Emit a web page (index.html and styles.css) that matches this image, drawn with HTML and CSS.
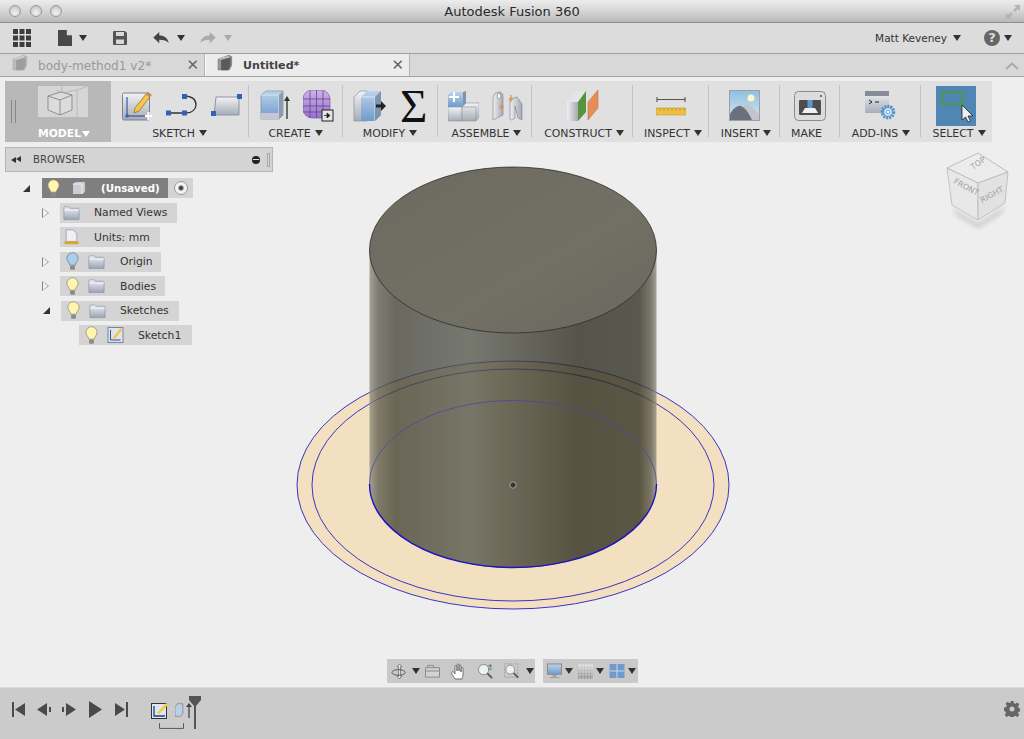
FILE: index.html
```html
<!DOCTYPE html>
<html lang="en">
<head>
<meta charset="utf-8">
<title>Autodesk Fusion 360</title>
<link rel="stylesheet" href="styles.css">
</head>
<body>
<svg class="defs" aria-hidden="true">
  <defs>
    <linearGradient id="gBlue" x1="0" y1="0" x2="0" y2="1"><stop offset="0" stop-color="#bcd3ea"/><stop offset="1" stop-color="#6f9bcb"/></linearGradient>
    <linearGradient id="gSilver" x1="0" y1="0" x2="0" y2="1"><stop offset="0" stop-color="#f2f3f5"/><stop offset="1" stop-color="#a7acb5"/></linearGradient>
    <linearGradient id="gSilverH" x1="0" y1="0" x2="1" y2="0"><stop offset="0" stop-color="#eef0f2"/><stop offset="1" stop-color="#a4a8b0"/></linearGradient>
    <linearGradient id="gFolder" x1="0" y1="0" x2="0" y2="1"><stop offset="0" stop-color="#f1f2f5"/><stop offset="1" stop-color="#9aa3b5"/></linearGradient>
    <linearGradient id="gPlate" x1="0" y1="0" x2="0" y2="1"><stop offset="0" stop-color="#f1f2f4"/><stop offset="1" stop-color="#a6adb8"/></linearGradient>
    <linearGradient id="gSky" x1="0" y1="0" x2="0" y2="1"><stop offset="0" stop-color="#8dc0e2"/><stop offset="1" stop-color="#d8e7ee"/></linearGradient>
    <linearGradient id="gPurple" x1="0" y1="0" x2="0" y2="1"><stop offset="0" stop-color="#cdb2ea"/><stop offset="1" stop-color="#9a6fd0"/></linearGradient>
    <linearGradient id="gCyl" x1="0" y1="0" x2="1" y2="0">
      <stop offset="0" stop-color="#908e80"/><stop offset=".03" stop-color="#605d4f"/><stop offset=".09" stop-color="#454337"/><stop offset=".21" stop-color="#4b4c43"/><stop offset=".35" stop-color="#54574b"/><stop offset=".52" stop-color="#424237"/><stop offset=".73" stop-color="#2a291d"/><stop offset=".94" stop-color="#302e21"/><stop offset=".98" stop-color="#5b584a"/><stop offset="1" stop-color="#908e80"/>
    </linearGradient>
    <linearGradient id="gCap" x1="0" y1="0" x2="1" y2="1"><stop offset="0" stop-color="#6d6a60"/><stop offset=".6" stop-color="#726f65"/><stop offset="1" stop-color="#6a675e"/></linearGradient>
    <filter id="soft" x="-20%" y="-20%" width="140%" height="140%"><feGaussianBlur stdDeviation="2.500"/></filter>
    <symbol id="bulbY" viewBox="0 0 12 18"><path d="M6 .7a5.300 5.300 0 0 0-5.300 5.300c0 2.700 2.300 3.700 2.800 6.500h5C9 9.700 11.300 8.700 11.300 6A5.300 5.300 0 0 0 6 .7z" fill="#fff5ae" stroke="#8c8a70" stroke-width=".7"/><rect x="3.700" y="12.800" width="4.600" height="4" rx="1" fill="#8a8a8a"/></symbol>
    <symbol id="bulbB" viewBox="0 0 12 18"><path d="M6 .7a5.300 5.300 0 0 0-5.300 5.300c0 2.700 2.300 3.700 2.800 6.500h5C9 9.700 11.300 8.700 11.300 6A5.300 5.300 0 0 0 6 .7z" fill="#a9cfee" stroke="#66788c" stroke-width=".7"/><rect x="3.700" y="12.800" width="4.600" height="4" rx="1" fill="#8a8a8a"/></symbol>
    <symbol id="folder" viewBox="0 0 18 16"><path d="M1 15V2.500q0-1 1-1h4l1.500 1.500H16q1 0 1 1V15z" fill="url(#gFolder)" stroke="#8f96a5" stroke-width=".8"/><path d="M1 5h16" stroke="#fff" stroke-width=".7"/></symbol>
    <symbol id="box" viewBox="0 0 20 20"><path d="M2 6l13-5 4 2v10l-3 6H2z" fill="#8a8a88"/><path d="M3 5l11-3 3 2-11 3z" fill="#bdbdbb"/><path d="M3 5l3 2v11l-3-2z" fill="#999"/><path d="M6 7l11-3v10l-3 5H6z" fill="#5a5a58"/></symbol>
  </defs>
</svg>

<div class="app">
  <header class="titlebar">
    <div class="lights"><i class="light"></i><i class="light"></i><i class="light"></i></div>
    <div class="title">Autodesk Fusion 360</div>
    <svg class="expand" viewBox="0 0 16 16"><path d="M9 1h6v6l-2-2-3 3-2-2 3-3zM7 15H1V9l2 2 3-3 2 2-3 3z" fill="#b4b4b4"/></svg>
  </header>

  <nav class="toolbar">
    <svg class="tb-grid" viewBox="0 0 18 18"><g fill="#3c3c3c"><rect width="5" height="5"/><rect x="6.500" width="5" height="5"/><rect x="13" width="5" height="5"/><rect y="6.500" width="5" height="5"/><rect x="6.500" y="6.500" width="5" height="5"/><rect x="13" y="6.500" width="5" height="5"/><rect y="13" width="5" height="5"/><rect x="6.500" y="13" width="5" height="5"/><rect x="13" y="13" width="5" height="5"/></g></svg>
    <svg class="tb-doc" viewBox="0 0 14 16"><path d="M0 0h8.500L14 5.500V16H0z" fill="#484848"/><path d="M8.800 0v5.200H14z" fill="#ddd"/></svg>
    <i class="caret caret-dark tb-doc-caret"></i>
    <svg class="tb-save" viewBox="0 0 14 14"><path d="M0 1q0-1 1-1h11l2 2v11q0 1-1 1H1q-1 0-1-1z" fill="#555"/><rect x="3" y="1" width="8" height="4" fill="#d9d9d9"/><rect x="3" y="8.500" width="8" height="4.500" fill="#d9d9d9"/></svg>
    <svg class="tb-undo" viewBox="0 0 18 14"><path d="M7 0v4c6 0 10 3 11 9-2-3-6-4-11-4v4L0 6.500z" fill="#444"/></svg>
    <i class="caret caret-dark tb-undo-caret"></i>
    <svg class="tb-redo" viewBox="0 0 18 14"><path d="M11 0v4C5 4 1 7 0 13c2-3 6-4 11-4v4l7-6.500z" fill="#ababab"/></svg>
    <i class="caret caret-faint tb-redo-caret"></i>
    <span class="tb-spacer"></span>
    <span class="user">Matt Keveney</span>
    <i class="caret caret-dark tb-user-caret"></i>
    <span class="help">?</span>
    <i class="caret caret-dark tb-help-caret"></i>
  </nav>

  <div class="tabs">
    <div class="tab tab-off">
      <svg class="tab-cube" viewBox="0 0 20 20"><use href="#box" opacity=".45"/></svg>
      <span class="tab-name">body-method1 v2*</span>
      <span class="tab-x">✕</span>
    </div>
    <div class="tab tab-on">
      <svg class="tab-cube" viewBox="0 0 20 20"><use href="#box"/></svg>
      <span class="tab-name">Untitled*</span>
      <span class="tab-x">✕</span>
    </div>
    <svg class="tabs-collapse" viewBox="0 0 14 8"><path d="M1 7l6-5.500L13 7" fill="none" stroke="#a8a8a8" stroke-width="1.800"/></svg>
  </div>

  <main class="stage">
    <svg class="scene" viewBox="0 0 1024 610">
      <g transform="translate(0,-77)">
        <ellipse cx="513" cy="485" rx="216" ry="124" fill="#f3e0c0" stroke="#3b33c4" stroke-width="1"/>
        <ellipse cx="513" cy="485" rx="201" ry="116" fill="none" stroke="#3b33c4" stroke-width="1"/>
        <path d="M369.500 250V484A143.500 84 0 0 0 656.500 484V250z" fill="url(#gCyl)" opacity=".78"/>
        <path d="M369.500 484A143.500 83.500 0 0 1 656.500 484" fill="none" stroke="#4a44a8" stroke-width=".9" opacity=".85"/>
        <path d="M369.500 484A143.500 83.500 0 0 0 656.500 484" fill="none" stroke="#1c14c0" stroke-width="1.400"/>
        <ellipse cx="513" cy="250" rx="143.500" ry="83" fill="url(#gCap)" stroke="#2e2d28" stroke-width=".8"/>
        <circle cx="513" cy="485" r="3.200" fill="#3a3638" stroke="#a9a5a0" stroke-width="1"/>
      </g>
    </svg>

    <section class="ribbon">
      <div class="rb-model">
        <i class="grip"></i>
        <svg class="rb-model-ico" viewBox="0 0 50 31">
          <path d="M0 0h50v31H0z" fill="#d6d6d6"/>
          <path d="M24 0v7l15-3V31M39 4L50 0M24 7L18 4" fill="none" stroke="#bdbdbd" stroke-width="1.200"/>
          <path d="M10 10l13-4 11 3v15l-12 5-12-5z" fill="#dcdcdc" stroke="#8f8f8f" stroke-width="1"/>
          <path d="M10 10l12 4 12-5M22 14v15" fill="none" stroke="#8f8f8f" stroke-width="1"/>
        </svg>
        <div class="rb-model-label">MODEL<i class="caret caret-white"></i></div>
      </div>

      <div class="grp g-sketch">
        <div class="icons i-sketch">
          <svg class="ico" width="30" height="32" viewBox="0 0 30 32"><rect x=".5" y="3" width="27" height="27" rx="1.500" fill="url(#gPlate)" stroke="#7a8290"/><path d="M5 7v19h21" fill="none" stroke="#1f3f8f" stroke-width="1"/><rect x="3.500" y="24.500" width="3" height="3" fill="#2f62b8"/><path d="M13 18L24 4l4 3-11 14-5 2z" fill="#f4c64a" stroke="#8a6a20" stroke-width=".7"/><path d="M24 4l2-2 4 3-2 2z" fill="#c98a5a"/><path d="M23 26h7M26.500 22v8" stroke="#fff" stroke-width="2.200"/></svg>
          <svg class="ico" width="31" height="24" viewBox="0 0 31 24"><path d="M3 19h17c6 0 10-3.500 10-8.500S26 2 18 2" fill="none" stroke="#333" stroke-width="1.300"/><g fill="#2f62b8"><rect x="0" y="16.500" width="5" height="5"/><rect x="16" y="16.500" width="5" height="5"/><rect x="16" y="0" width="5" height="5"/></g></svg>
          <svg class="ico" width="31" height="24" viewBox="0 0 31 24"><path d="M3 21L5 3h23v18z" fill="url(#gPlate)" stroke="#8d95a2"/><g fill="#2f62b8"><rect x="0" y="17" width="5" height="5"/><rect x="26" y="0" width="5" height="5"/></g></svg>
        </div>
        <div class="label">SKETCH<i class="caret caret-dark"></i></div>
      </div>

      <div class="grp g-create">
        <div class="icons i-create">
          <svg class="ico" width="30" height="31" viewBox="0 0 30 31"><path d="M1 5l5-4h17v24l-4 4H1z" fill="url(#gBlue)" stroke="#7a8ca0" stroke-width=".7"/><path d="M1 23h18v6H1z" fill="#c5c9cf"/><path d="M1 5h18v18" fill="none" stroke="#d7e6f3"/><path d="M19 5l4-4v24l-4 4z" fill="#8b9cb0"/><path d="M27 29V9" stroke="#444" stroke-width="1.500"/><path d="M24 11l3-5 3 5z" fill="#333"/></svg>
          <svg class="ico" width="31" height="32" viewBox="0 0 31 32"><rect x="0" y="0" width="27" height="28" rx="9" fill="url(#gPurple)" stroke="#7c5aa8" stroke-width=".7"/><path d="M0 9h27M0 16h27M0 22h27M7 1v27M13.500 0v28M20 1v27" stroke="#5e4a80" stroke-width=".8"/><rect x="19" y="20" width="11" height="11" fill="#e5e5e5" stroke="#222"/><path d="M21 25.500h4M24 23l3 2.500-3 2.500z" fill="#222" stroke="#222" stroke-width=".8"/></svg>
        </div>
        <div class="label">CREATE<i class="caret caret-dark"></i></div>
      </div>

      <div class="grp g-modify">
        <div class="icons i-modify">
          <svg class="ico" width="33" height="32" viewBox="0 0 33 32"><path d="M1 7l6-6h7v30H1z" fill="url(#gSilver)" stroke="#8a909a" stroke-width=".7"/><path d="M8 7l6-6h14v24l-6 6H8z" fill="url(#gBlue)"/><path d="M8 7h14v24" fill="none" stroke="#dbe8f3"/><path d="M22 7l6-6v24l-6 6z" fill="#7f95ad"/><path d="M23 14.500h5V11l5 5-5 5v-3.500h-5z" fill="#222"/></svg>
          <span class="sigma">Σ</span>
        </div>
        <div class="label">MODIFY<i class="caret caret-dark"></i></div>
      </div>

      <div class="grp g-assemble">
        <div class="icons i-assemble">
          <svg class="ico" width="31" height="32" viewBox="0 0 31 32"><path d="M0 5l3-3h15v15H0z" fill="url(#gBlue)"/><path d="M15 2l3-1v16h-3z" fill="#7f95ad"/><path d="M0 17h14v14H0z" fill="url(#gSilver)" stroke="#8a909a" stroke-width=".6"/><path d="M14 17l4-4h13v14l-3 4H14z" fill="url(#gSilver)" stroke="#8a909a" stroke-width=".6"/><path d="M14 17h14v14" fill="none" stroke="#8a909a" stroke-width=".6"/><path d="M1 7h10M6 2v10" stroke="#fff" stroke-width="2"/></svg>
          <svg class="ico" width="32" height="30" viewBox="0 0 32 30"><path d="M1 29V9Q1 1 7 1q4 0 4 5v18z" fill="url(#gSilverH)" stroke="#868c96" stroke-width=".7"/><ellipse cx="7" cy="5" rx="1.800" ry="2.500" fill="#fff" stroke="#777" stroke-width=".6"/><path d="M18 8v20q0 1 2 1l3-2V15l3 12 4 2V13l-5-7z" fill="url(#gSilverH)" stroke="#868c96" stroke-width=".7"/><path d="M7 16h5M9.500 13.500v5M19 4v7M16.500 8h5" stroke="#e2893a" stroke-width="1.200"/></svg>
        </div>
        <div class="label">ASSEMBLE<i class="caret caret-dark"></i></div>
      </div>

      <div class="grp g-construct">
        <div class="icons i-construct">
          <svg class="ico" width="32" height="31" viewBox="0 0 32 31"><path d="M0 12L10 1h9l-8 11z" fill="#e4e5e7"/><path d="M0 12h11v19H2q-2 0-2-2z" fill="url(#gSilverH)"/><path d="M11 12l8-11v21l-8 9z" fill="#57943f"/><path d="M21 30V12L31 0v18z" fill="#e58e57" stroke="#b56f3f" stroke-width=".5"/></svg>
        </div>
        <div class="label">CONSTRUCT<i class="caret caret-dark"></i></div>
      </div>

      <div class="grp g-inspect">
        <div class="icons i-inspect">
          <svg class="ico" width="30" height="20" viewBox="0 0 30 20"><path d="M1 1v5M29 1v5" stroke="#444" stroke-width="1"/><path d="M1 3.500h28" stroke="#555" stroke-width="1"/><rect x="0" y="12" width="30" height="7" fill="#efc044" stroke="#c09a30" stroke-width=".6"/><path d="M4 12v3M8 12v3M12 12v3M16 12v3M20 12v3M24 12v3M28 12v3" stroke="#a58428" stroke-width=".6"/></svg>
        </div>
        <div class="label">INSPECT<i class="caret caret-dark"></i></div>
      </div>

      <div class="grp g-insert">
        <div class="icons i-insert">
          <svg class="ico" width="31" height="31" viewBox="0 0 31 31"><rect x=".5" y=".5" width="30" height="30" fill="url(#gSky)" stroke="#9aa0a8"/><circle cx="22" cy="8" r="3.500" fill="#fdf6c8"/><path d="M8 22l9-9 6 4 7 7v6H8z" fill="#c2c6cc"/><path d="M1 24c3-5 7-9 11-8 5 2 8 8 11 14H1z" fill="#6a707e"/></svg>
        </div>
        <div class="label">INSERT<i class="caret caret-dark"></i></div>
      </div>

      <div class="grp g-make">
        <div class="icons i-make">
          <svg class="ico" width="32" height="30" viewBox="0 0 32 30"><rect x=".5" y=".5" width="31" height="29" rx="4" fill="#dcdcdc" stroke="#8a8a8a"/><rect x="5" y="9" width="22" height="15" rx="1" fill="#4e4e4e"/><rect x="13.500" y="9" width="5" height="8" fill="#5b98d0"/><path d="M8 22l3-5h10l3 5z" fill="#f1f1f1"/><rect x="26" y="4" width="2" height="2" fill="#3e9a3e"/></svg>
        </div>
        <div class="label">MAKE</div>
      </div>

      <div class="grp g-addins">
        <div class="icons i-addins">
          <svg class="ico" width="31" height="29" viewBox="0 0 31 29"><rect x="0" y="0" width="24" height="22" rx="1" fill="url(#gPlate)"/><rect x="0" y="0" width="24" height="5" fill="#858b97"/><path d="M4 9l3 2-3 2M10 11h4" fill="none" stroke="#222" stroke-width="1"/><circle cx="23" cy="21" r="6" fill="none" stroke="#4a8fd0" stroke-width="2.600" stroke-dasharray="2 1"/><circle cx="23" cy="21" r="4.500" fill="#cfe2f4" stroke="#4a8fd0"/><circle cx="23" cy="21" r="1.800" fill="#fff" stroke="#4a8fd0" stroke-width=".7"/></svg>
        </div>
        <div class="label">ADD-INS<i class="caret caret-dark"></i></div>
      </div>

      <div class="grp g-select">
        <div class="icons i-select">
          <svg class="ico" width="40" height="40" viewBox="0 0 40 40"><rect width="40" height="40" fill="#4f86b4"/><rect x="6.500" y="6.500" width="20" height="12" fill="none" stroke="#4f9168" stroke-width="3"/><path d="M26 19v15l3.500-3 2.500 5 2.500-1-2.500-5h5z" fill="#eee" stroke="#222" stroke-width=".8"/></svg>
        </div>
        <div class="label">SELECT<i class="caret caret-dark"></i></div>
      </div>
    </section>

    <section class="browser">
      <i class="br-back"></i>
      <span class="br-title">BROWSER</span>
      <i class="br-min"></i>
      <i class="br-grip"></i>
    </section>

    <ul class="tree">
      <li class="node n-root">
        <i class="tri-open"></i>
        <div class="chip-root">
          <svg class="bulb"><use href="#bulbY"/></svg>
          <svg class="cube-mini" viewBox="0 0 14 14"><path d="M1 3l3-2h9v10l-3 2H1z" fill="#c9ccd2"/><path d="M1 3h9v10" fill="none" stroke="#eef0f3"/></svg>
          <span class="root-name">(Unsaved)</span>
        </div>
        <div class="chip-radio"><i class="radio"></i></div>
      </li>
      <li class="node n-1">
        <i class="tri-closed"></i>
        <div class="chip c-views"><svg class="folder"><use href="#folder"/></svg><span>Named Views</span></div>
      </li>
      <li class="node n-1 no-tri">
        <div class="chip c-units">
          <svg class="folder" viewBox="0 0 16 18"><path d="M2 14V1h8l4 4v9z" fill="#eef0f4" stroke="#8f96a5" stroke-width=".8"/><rect x="0" y="14" width="16" height="3" fill="#d9a52d"/></svg>
          <span>Units: mm</span>
        </div>
      </li>
      <li class="node n-1">
        <i class="tri-closed"></i>
        <div class="chip c-origin"><svg class="bulb"><use href="#bulbB"/></svg><svg class="folder"><use href="#folder"/></svg><span>Origin</span></div>
      </li>
      <li class="node n-1">
        <i class="tri-closed"></i>
        <div class="chip c-bodies"><svg class="bulb"><use href="#bulbY"/></svg><svg class="folder"><use href="#folder"/></svg><span>Bodies</span></div>
      </li>
      <li class="node n-1">
        <i class="tri-open"></i>
        <div class="chip c-sketches"><svg class="bulb"><use href="#bulbY"/></svg><svg class="folder"><use href="#folder"/></svg><span>Sketches</span></div>
      </li>
      <li class="node n-2">
        <div class="chip c-sketch1">
          <svg class="bulb"><use href="#bulbY"/></svg>
          <svg class="folder" viewBox="0 0 16 16"><rect x=".5" y=".5" width="15" height="15" fill="#dfe4ec" stroke="#7d8594"/><path d="M3 3v10h10" fill="none" stroke="#2f4f96"/><path d="M5 11L13 1l2 2-8 9z" fill="#f4c64a"/></svg>
          <span>Sketch1</span>
        </div>
      </li>
    </ul>

    <svg class="viewcube" viewBox="0 0 80 85">
      <path d="M12 60L38 76 66 58 60 66 38 80 18 68z" fill="#000" opacity=".18" filter="url(#soft)"/>
      <path d="M38 5L68 24 38 35 7 20z" fill="#ececec" stroke="#b0b0b0" stroke-width=".8"/>
      <path d="M7 20L38 35V72L12 57z" fill="#e8e8e8" stroke="#b8b8b8" stroke-width=".8"/>
      <path d="M68 24L38 35V72L65 55z" fill="#e2e2e2" stroke="#b8b8b8" stroke-width=".8"/>
      <text class="cube-t" transform="translate(33,22) rotate(-35)">TOP</text>
      <text class="cube-t" transform="translate(13,35) rotate(28)">FRONT</text>
      <text class="cube-t" transform="translate(42,55) rotate(-28)">RIGHT</text>
    </svg>

    <div class="navbar">
      <div class="nav-group ng-a">
        <svg class="nav-orbit" viewBox="0 0 18 18"><path d="M9 1l2.500 3H10v10h1.500L9 17l-2.500-3H8V4H6.500z" fill="#eee" stroke="#555" stroke-width=".7"/><ellipse cx="8" cy="10" rx="7" ry="3" fill="none" stroke="#555"/></svg>
        <i class="caret caret-dark nav-c1"></i>
        <svg class="nav-look" viewBox="0 0 16 14"><rect x=".5" y="3.500" width="15" height="10" fill="#d2d2d2" stroke="#888"/><path d="M.5 7h15M3 3.500V1h6v2.500" fill="none" stroke="#888"/></svg>
        <svg class="nav-hand" viewBox="0 0 16 17"><path d="M4 16c-1-2-4-5-3.500-6.500S3 9 4 11V3.500c0-1.500 2-1.500 2 0V8 2c0-1.500 2-1.500 2 0v6-5c0-1.500 2-1.500 2 0v6-3.500c0-1.500 2-1.500 2 0V12c0 2-1 3-1 4z" fill="#fff" stroke="#555" stroke-width=".8"/></svg>
        <svg class="nav-zoom" viewBox="0 0 18 17"><circle cx="7" cy="7" r="5.500" fill="#eaf2f5" stroke="#888"/><path d="M11 11l5 5" stroke="#555" stroke-width="2"/><path d="M14 1v4M12 3h4M12 6.500h4" stroke="#555" stroke-width=".8"/></svg>
        <svg class="nav-fit" viewBox="0 0 18 17"><rect x=".5" y=".5" width="15" height="15" fill="none" stroke="#999" stroke-dasharray="2 1.500"/><circle cx="7" cy="7" r="5" fill="#eaf2f5" stroke="#888"/><path d="M11 11l5 5" stroke="#555" stroke-width="2"/></svg>
        <i class="caret caret-dark nav-c2"></i>
      </div>
      <div class="nav-group ng-b">
        <svg class="nav-mon" viewBox="0 0 16 16"><rect x=".5" y=".5" width="15" height="11" fill="url(#gBlue)" stroke="#888"/><path d="M6 12h4v2H6z" fill="#999"/><path d="M3 15h10" stroke="#999"/></svg>
        <i class="caret caret-dark"></i>
        <svg class="nav-gridi" viewBox="0 0 15 15"><defs><linearGradient id="gGrid" x1="0" y1="0" x2="0" y2="1"><stop offset="0" stop-color="#d8d8d8"/><stop offset="1" stop-color="#808080"/></linearGradient></defs><rect width="15" height="15" fill="url(#gGrid)"/><path d="M2 0v15M5 0v15M8 0v15M11 0v15M14 0v15M0 2h15M0 5h15M0 8h15M0 11h15M0 14h15" stroke="#eee" stroke-width=".5"/></svg>
        <i class="caret caret-dark"></i>
        <svg class="nav-win" viewBox="0 0 15 14"><rect width="15" height="14" fill="#7199cc"/><path d="M7.500 0v14M0 7h15" stroke="#c8d8ec"/></svg>
        <i class="caret caret-dark"></i>
      </div>
    </div>
  </main>

  <footer class="timeline">
    <svg class="tl tl-first" viewBox="0 0 13 15"><path d="M0 0h2v15H0zM13 1v13L3 7.500z" fill="#4a4a4a"/></svg>
    <svg class="tl tl-prev" viewBox="0 0 14 13"><path d="M10 0v13L0 6.500zM12 4h2v5h-2z" fill="#4a4a4a"/></svg>
    <svg class="tl tl-next" viewBox="0 0 14 13"><path d="M4 0v13l10-6.500zM0 4h2v5H0z" fill="#4a4a4a"/></svg>
    <svg class="tl tl-play" viewBox="0 0 13 17"><path d="M0 0v17l13-8.500z" fill="#4a4a4a"/></svg>
    <svg class="tl tl-last" viewBox="0 0 13 15"><path d="M11 0h2v15h-2zM0 1v13l10-6.500z" fill="#4a4a4a"/></svg>
    <div class="tl-feats">
      <svg class="tl-sk" viewBox="0 0 17 17"><rect x=".5" y="1.500" width="15" height="15" fill="#dfe6f0" stroke="#333"/><path d="M3 4v10h11" fill="none" stroke="#1f3f8f" stroke-width="1.300"/><path d="M6 11l9-10 2 2-9 9z" fill="#f4cc3a"/></svg>
      <svg class="tl-ex" viewBox="0 0 14 16"><path d="M0 4l3-4h7v12l-3 4H0z" fill="#bcd0e4" stroke="#667" stroke-width=".7"/></svg>
      <svg class="tl-arrow" viewBox="0 0 6 15"><path d="M3 15V3" stroke="#555" stroke-width="1.500"/><path d="M0 4l3-4 3 4z" fill="#444"/></svg>
      <svg class="tl-bracket" viewBox="0 0 26 7"><path d="M.5 0v5.500h25V0" fill="none" stroke="#555"/></svg>
      <svg class="tl-marker" viewBox="0 0 12 33"><path d="M0 0h12v4L7 10v23H5V10L0 4z" fill="#555"/></svg>
    </div>
    <svg class="tl-gear" viewBox="0 0 16 16"><path d="M6.500 0h3l.4 2.200 1.500.6L13.300 1.500l2 2-1.300 1.900.6 1.500 2.200.4v3l-2.200.4-.6 1.500 1.300 1.900-2 2-1.900-1.300-1.500.6-.4 2.200h-3l-.4-2.200-1.500-.6-1.900 1.300-2-2 1.300-1.900-.6-1.500L0 9.500v-3l2.200-.4.6-1.500L1.500 2.700l2-2 1.900 1.300 1.500-.6z" fill="#666"/><circle cx="8" cy="8" r="2.500" fill="#cbcbcb"/></svg>
  </footer>
</div>
</body>
</html>
```

FILE: styles.css
```css
* { box-sizing: border-box; }
html, body { margin: 0; padding: 0; height: 100%; overflow: hidden; }
body { font-family: "DejaVu Sans", "Open Sans", sans-serif; color: #333; background: #eee; }
.defs { position: absolute; width: 0; height: 0; }
i { display: block; font-style: normal; }
svg { display: block; flex: none; }

.app { display: flex; flex-direction: column; width: 1024px; height: 739px; }

/* window chrome */
.titlebar { flex: none; height: 23px; display: flex; align-items: center; justify-content: center; position: relative;
  background: linear-gradient(#ececec, #d9d9d9 45%, #b9b9b9); border-bottom: 1px solid #8f8f8f; }
.lights { position: absolute; left: 9px; top: 5px; display: flex; gap: 8.500px; }
.light { width: 12px; height: 12px; border-radius: 50%; border: 1px solid #9a9a9a; background: radial-gradient(circle at 50% 70%, #f2f2f2, #bdbdbd); }
.title { font-size: 13px; color: #2a2a2a; }
.expand { position: absolute; right: 3px; top: 4px; width: 16px; height: 16px; }

.toolbar { flex: none; height: 31px; display: flex; align-items: center; background: #dcdcdc; border-bottom: 1px solid #9e9e9e; padding-left: 13px; }
.tb-grid { width: 18px; height: 18px; }
.tb-doc { width: 14px; height: 16px; margin-left: 27px; }
.tb-doc-caret { margin-left: 7px; }
.tb-save { width: 14px; height: 14px; margin-left: 26px; }
.tb-undo { width: 16px; height: 12px; margin-left: 26px; }
.tb-undo-caret { margin-left: 8px; }
.tb-redo { width: 16px; height: 12px; margin-left: 15px; }
.tb-redo-caret { margin-left: 8px; }
.tb-spacer { flex: 1; }
.user { font-size: 10.500px; color: #333; }
.tb-user-caret { margin-left: 6px; }
.help { width: 16px; height: 16px; margin-left: 23px; border-radius: 50%; background: #666; color: #ddd; font: bold 13px/16px "DejaVu Sans", sans-serif; text-align: center; }
.tb-help-caret { margin-left: 4px; margin-right: 12px; }

.tabs { flex: none; height: 23px; display: flex; background: #d8d8d8; border-bottom: 1px solid #a3a3a3; position: relative; }
.tab { display: flex; align-items: center; height: 22px; width: 205px; padding-left: 11px; border-right: 1px solid #b5b5b5; }
.tab-on { background: #ececec; border-left: 1px solid #fafafa; padding-left: 10px; }
.tab-off { color: #999; }
.tab-cube { width: 17px; height: 17px; margin-top: -5px; }
.tab-name { margin-left: 10px; margin-top: 1px; flex: 1; white-space: nowrap; font-size: 12.100px; }
.tab-on .tab-name { margin-left: 10px; color: #444; font-weight: 700; font-size: 11.100px; }
.tab-x { font-size: 15px; line-height: 20px; color: #666; margin-right: 5px; }
.tabs-collapse { position: absolute; right: 5px; top: 8px; width: 14px; height: 8px; }

/* stage */
.stage { flex: 1; position: relative; background: #eeeeee; padding: 4px 0 0 5px; overflow: hidden; min-height: 0; }
.scene { position: absolute; left: 0; top: 0; width: 1024px; height: 610px; }

.ribbon { position: relative; display: flex; width: 987px; height: 61px; background: #e0e0e0; }
.rb-model { width: 106px; height: 61px; background: #b8b8b8; position: relative; display: flex; flex-direction: column; align-items: center; flex: none; padding-left: 8px; }
.grip { position: absolute; left: 6px; top: 19px; width: 5px; height: 23px; border-left: 1px solid #888; border-right: 1px solid #888; }
.rb-model-ico { width: 50px; height: 31px; margin-top: 5px; margin-left: 2px; }
.rb-model-label { display: flex; align-items: center; gap: 1px; font-size: 10.800px; font-weight: 700; color: #fff; margin-top: 10px; margin-left: 4px; }
.caret { flex: none; width: 0; height: 0; border-left: 4px solid transparent; border-right: 4px solid transparent; border-top: 6px solid #333; }
.caret-dark { border-top-color: #333; }
.caret-faint { border-top-color: #a8a8a8; }
.caret-white { border-top-color: #fff; border-left-width: 4.500px; border-right-width: 4.500px; }

.grp { flex: none; height: 52px; margin-top: 4px; border-right: 1px solid #c4c4c4; display: flex; flex-direction: column; }
.icons { flex: none; height: 41px; display: flex; align-items: center; }
.label { flex: none; display: flex; align-items: center; justify-content: center; gap: 4px; height: 12px; margin-top: 1px; font-size: 10.900px; color: #333; white-space: nowrap; }
.g-sketch { width: 138px; } .i-sketch { padding-left: 11px; gap: 14px; }
.g-create { width: 94px; } .i-create { padding-left: 11px; gap: 13px; }
.g-modify { width: 95px; } .i-modify { padding-left: 10px; gap: 14px; }
.g-assemble { width: 94px; } .i-assemble { padding-left: 10px; gap: 13px; }
.g-assemble .label { padding-left: 4px; }
.g-construct { width: 101px; } .i-construct { padding-left: 35px; }
.g-construct .label { padding-left: 4px; }
.g-inspect { width: 76px; } .i-inspect { padding-left: 23px; }
.g-inspect .label { padding-left: 5px; }
.g-insert { width: 71px; } .i-insert { padding-left: 20px; }
.g-insert .label { padding-left: 4px; }
.g-make { width: 60px; } .i-make { padding-left: 14px; }
.g-make .label { padding-right: 6px; }
.g-addins { width: 81px; } .i-addins { padding-left: 25px; }
.g-addins .label { padding-left: 2px; }
.g-select { width: 71px; border-right: 0; } .i-select { padding-left: 15px; }
.g-select .label { padding-left: 5px; }
.sigma { font: 400 47px/36px "Liberation Serif", serif; color: #111; width: 27px; text-align: center; }

/* browser */
.browser { position: relative; display: flex; align-items: center; width: 268px; height: 25px; margin-top: 5px; background: #d4d4d4; border: 1px solid #b5b5b5; font-size: 10.200px; color: #444; }
.br-back { width: 0; height: 0; margin-left: 5px; border-right: 5px solid #333; border-top: 3.500px solid transparent; border-bottom: 3.500px solid transparent; position: relative; }
.br-back::after { content: ""; position: absolute; left: 5px; top: -3.500px; border-right: 5px solid #333; border-top: 3.500px solid transparent; border-bottom: 3.500px solid transparent; }
.br-title { margin-left: 17px; margin-top: -1px; flex: 1; }
.br-min { width: 8px; height: 8px; border-radius: 50%; background: #222; position: relative; }
.br-min::after { content: ""; position: absolute; left: 1px; right: 1px; top: 3.500px; height: 1px; background: #ddd; }
.br-grip { width: 3px; height: 14px; margin: 0 2px 0 7px; border: 1px solid #aaa; }

/* tree */
.tree { position: relative; list-style: none; margin: 6px 0 0; padding: 0; display: flex; flex-direction: column; gap: 4.500px; font-size: 10.800px; color: #333; }
.node { display: flex; align-items: center; height: 20px; }
.n-root { padding-left: 18px; }
.n-1 { padding-left: 37px; }
.n-1.no-tri { padding-left: 55px; }
.n-2 { padding-left: 74px; }
.tri-open { width: 0; height: 0; border-bottom: 7px solid #333; border-left: 7px solid transparent; margin-right: 12px; }
.n-1 .tri-open { margin-right: 11px; margin-left: 1px; }
.tri-closed { width: 0; height: 0; position: relative; margin-right: 11px; border-left: 7px solid #888; border-top: 5.500px solid transparent; border-bottom: 5.500px solid transparent; }
.tri-closed::after { content: ""; position: absolute; left: -6px; top: -4px; border-left: 5px solid #f2f2f2; border-top: 4px solid transparent; border-bottom: 4px solid transparent; }
.chip { display: flex; align-items: center; height: 20px; background: #d4d4d4; padding-left: 3px; white-space: nowrap; }
.chip span { margin-left: 15px; }
.chip .bulb { margin-left: 3px; margin-right: 9px; }
.bulb { width: 13px; height: 19px; }
.folder { width: 17px; height: 16px; }
.c-views { width: 117px; }
.c-views span { margin-left: 14px; }
.c-units { width: 100px; }
.c-units span { margin-left: 14px; }
.c-origin { width: 101px; }
.c-bodies { width: 105px; }
.c-sketches { width: 118px; }
.c-sketches span { margin-left: 14px; }
.c-sketch1 { width: 113px; }
.c-sketch1 span { margin-left: 14px; }
.chip-root { display: flex; align-items: center; width: 126px; height: 20px; background: #7f7f7f; padding-left: 5px; }
.cube-mini { width: 14px; height: 14px; margin-left: 12px; }
.root-name { color: #fff; font-weight: 700; font-size: 10.200px; margin-left: 15px; }
.chip-radio { display: flex; align-items: center; justify-content: center; width: 25px; height: 20px; background: #d4d4d4; }
.radio { width: 14px; height: 14px; border-radius: 50%; border: 1px solid #999; background: radial-gradient(circle, #444 0 1.500px, #9aa 2.500px, #f2f2f2 3.200px); }

/* view cube */
.viewcube { position: absolute; left: 940px; top: 71px; width: 80px; height: 85px; }
.cube-t { font: 8px "DejaVu Sans", sans-serif; fill: #a2a2a2; }

/* nav bar */
.navbar { position: absolute; left: 387px; top: 582px; display: flex; gap: 8px; }
.nav-group { display: flex; align-items: center; height: 24px; background: #c9c9c9; }
.ng-a { width: 148px; padding-left: 4px; }
.ng-b { width: 95px; padding-left: 4px; }
.ng-b .caret { margin-left: 3px; }
.nav-orbit { width: 17px; height: 17px; }
.nav-c1 { margin-left: 4px; }
.nav-look { width: 15px; height: 14px; margin-left: 5px; }
.nav-hand { width: 16px; height: 17px; margin-left: 11px; }
.nav-zoom { width: 17px; height: 16px; margin-left: 10px; }
.nav-fit { width: 16px; height: 16px; margin-left: 10px; }
.nav-c2 { margin-left: 6px; }
.nav-mon { width: 15px; height: 16px; }
.nav-gridi { width: 15px; height: 15px; margin-left: 5px; }
.nav-win { width: 16px; height: 14px; margin-left: 5px; }

/* timeline */
.timeline { flex: none; height: 52px; display: flex; align-items: center; background: #cbcbcb; border-top: 1px solid #d9d9d9; padding: 0 4px 8px 12px; position: relative; }
.tl-first { width: 13px; height: 15px; }
.tl-prev { width: 14px; height: 13px; margin-left: 12px; }
.tl-next { width: 14px; height: 13px; margin-left: 11px; }
.tl-play { width: 13px; height: 17px; margin-left: 13px; }
.tl-last { width: 13px; height: 15px; margin-left: 13px; }
.tl-feats { position: relative; width: 60px; height: 40px; margin-left: 23px; }
.tl-sk { position: absolute; left: 0; top: 12px; width: 17px; height: 17px; }
.tl-ex { position: absolute; left: 24px; top: 12px; width: 11px; height: 16px; }
.tl-arrow { position: absolute; left: 35px; top: 13px; width: 6px; height: 15px; }
.tl-bracket { position: absolute; left: 8px; top: 33px; width: 25px; height: 7px; }
.tl-marker { position: absolute; left: 38px; top: 6px; width: 12px; height: 33px; }
.tl-gear { position: absolute; right: 4px; top: 13px; width: 16px; height: 16px; }
```
